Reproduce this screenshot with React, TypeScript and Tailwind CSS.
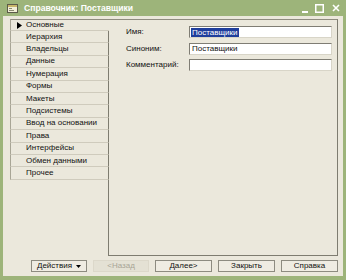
const tabs = [
  "Иерархия",
  "Владельцы",
  "Данные",
  "Нумерация",
  "Формы",
  "Макеты",
  "Подсистемы",
  "Ввод на основании",
  "Права",
  "Интерфейсы",
  "Обмен данными",
  "Прочее",
];

const fields = [
  { label: "Имя:", value: "Поставщики", selected: true },
  { label: "Синоним:", value: "Поставщики", selected: false },
  { label: "Комментарий:", value: "", selected: false },
];

const buttons = ["Далее>", "Закрыть", "Справка"];

export default function App() {
  return (
    <div
      className="flex h-[280px] w-[346px] flex-col bg-[#9db47a] px-[3px] pb-[4px] text-[8px] text-[#111]"
      style={{ fontFamily: '"Liberation Sans", Arial, sans-serif' }}
    >
      {/* title bar */}
      <div className="flex h-[16px] shrink-0 items-center pl-[4px] pr-[3px]">
        <svg width="11" height="9" viewBox="0 0 11 9" className="mr-[6px]">
          <rect x="0.5" y="0.5" width="10" height="8" fill="#f3efd8" stroke="#5c5a4a" />
          <rect x="1" y="1" width="9" height="2" fill="#c9b66a" />
          <rect x="2" y="4" width="3" height="1" fill="#8a8a70" />
          <rect x="2" y="6" width="5" height="1" fill="#8a8a70" />
        </svg>
        <span className="text-[8.6px] font-bold leading-none text-white">Справочник: Поставщики</span>
        <div className="ml-auto flex items-center gap-[6px] text-white">
          <svg width="8" height="9" viewBox="0 0 8 9">
            <rect x="1" y="7" width="6" height="2" fill="#fff" />
          </svg>
          <svg width="9" height="9" viewBox="0 0 9 9">
            <rect x="0.75" y="0.75" width="7.5" height="7.5" fill="none" stroke="#fff" strokeWidth="1.5" />
          </svg>
          <svg width="8" height="8" viewBox="0 0 8 8" className="ml-[2px]">
            <path d="M1 1L7 7M7 1L1 7" stroke="#fff" strokeWidth="1.6" />
          </svg>
        </div>
      </div>

      {/* body */}
      <div className="flex flex-1 flex-col bg-[#ebe8dc] pb-[4px] pl-[7px] pr-[5px] pt-[3px]">
        <div className="flex flex-1">
          {/* tab list */}
          <div className="flex w-[99px] flex-col">
            <div className="flex h-[12px] items-center border-l border-t border-b border-l-[#a8a595] border-t-[#8f8c80] border-b-[#cfcbbd] pl-[6px]">
              <svg width="5" height="7" viewBox="0 0 5 7" className="mr-[4px]">
                <path d="M0 0L5 3.5L0 7Z" fill="#000" />
              </svg>
              <span className="leading-none">Основные</span>
            </div>
            {tabs.map((t) => (
              <div
                key={t}
                className="flex h-[12.4px] items-center border-b border-l border-r border-b-[#cfcbbd] border-l-[#a8a595] border-r-[#7e7c70] pl-[15px]"
              >
                <span className="leading-none">{t}</span>
              </div>
            ))}
            <div className="flex-1 border-r border-[#7e7c70]" />
          </div>

          {/* panel */}
          <div className="flex flex-1 flex-col gap-[4.5px] border-b border-r border-t border-b-[#7e7c70] border-r-[#7e7c70] border-t-[#8f8c80] pl-[17px] pr-[5px] pt-[6px]">
            {fields.map((f) => (
              <div key={f.label} className="flex items-center">
                <span className="w-[63px] leading-none">{f.label}</span>
                <div className="flex h-[12px] flex-1 items-center border border-[#7f7d74] border-b-[#d8d5c8] border-r-[#d8d5c8] bg-white pl-[1px]">
                  {f.value &&
                    (f.selected ? (
                      <span className="bg-[#1f3e9c] px-[1px] leading-[9px] text-white">{f.value}</span>
                    ) : (
                      <span className="px-[1px] leading-none">{f.value}</span>
                    ))}
                </div>
              </div>
            ))}
          </div>
        </div>

        {/* buttons */}
        <div className="mt-[4px] flex gap-[6px] pl-[21px]">
          <div className="flex h-[12px] w-[56px] items-center border border-[#8d8b80] bg-[#efece2] pl-[5px]">
            <span className="leading-none">Действия</span>
            <svg width="5" height="3" viewBox="0 0 5 3" className="ml-auto mr-[5px]">
              <path d="M0 0H5L2.5 3Z" fill="#000" />
            </svg>
          </div>
          <div className="flex h-[12px] w-[56px] items-center justify-center border border-[#dcd8ca] bg-[#e4e1d4] text-[#a8a596]">
            <span className="leading-none">&lt;Назад</span>
          </div>
          {buttons.map((b) => (
            <div
              key={b}
              className="flex h-[12px] w-[57px] items-center justify-center border border-[#8d8b80] bg-[#efece2]"
            >
              <span className="leading-none">{b}</span>
            </div>
          ))}
        </div>
      </div>
    </div>
  );
}
